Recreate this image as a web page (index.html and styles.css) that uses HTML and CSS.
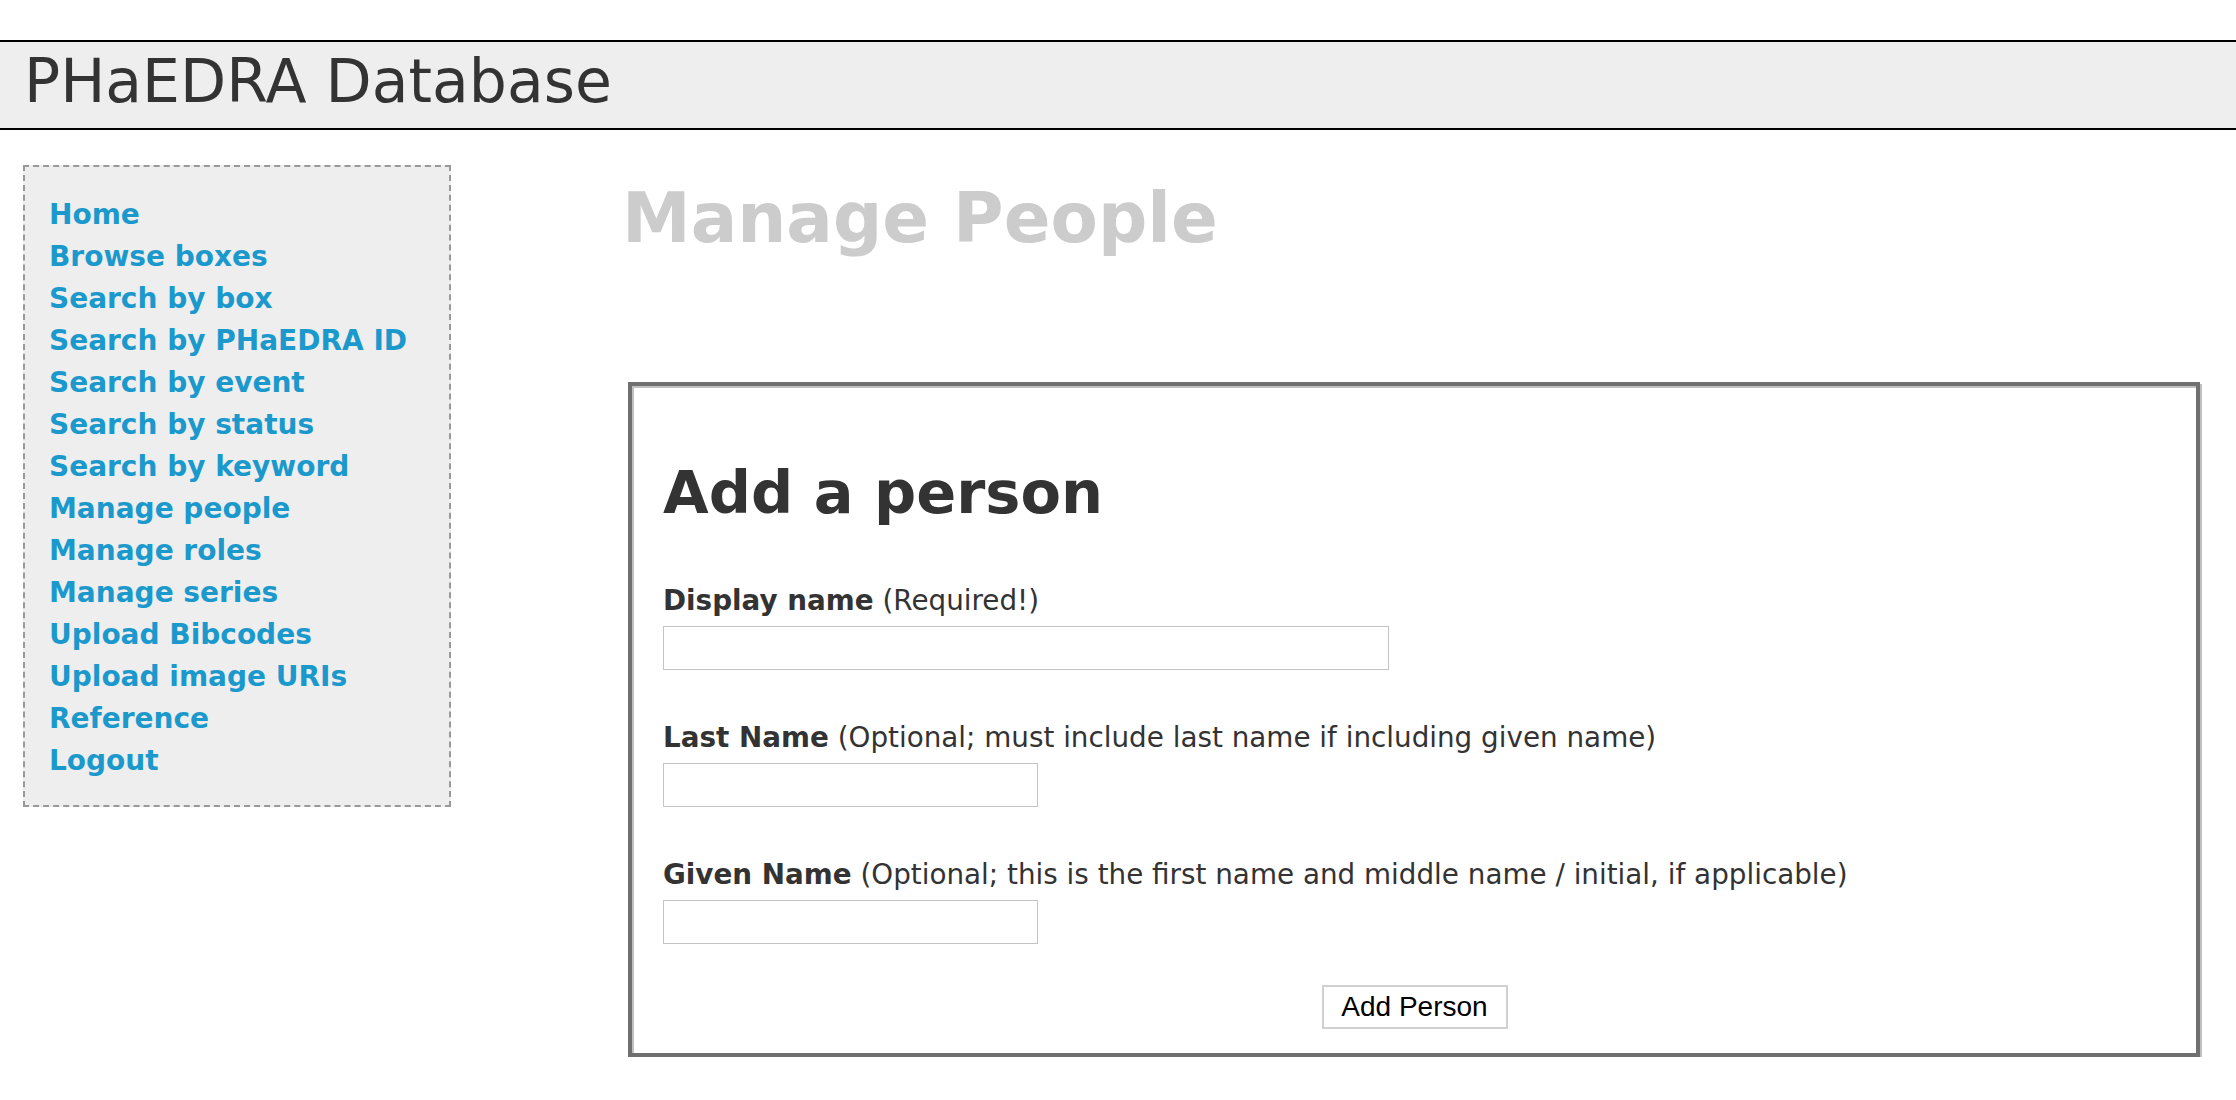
FILE: index.html
```html
<!DOCTYPE html>
<html lang="en">
<head>
<meta charset="utf-8">
<title>PHaEDRA Database - Manage People</title>
<link rel="stylesheet" href="styles.css">
</head>
<body>
<header class="site-header">
  <div class="site-title">PHaEDRA Database</div>
</header>
<div class="layout">
  <nav class="sidebar">
    <ul class="nav-list">
      <li><a href="#">Home</a></li>
      <li><a href="#">Browse boxes</a></li>
      <li><a href="#">Search by box</a></li>
      <li><a href="#">Search by PHaEDRA ID</a></li>
      <li><a href="#">Search by event</a></li>
      <li><a href="#">Search by status</a></li>
      <li><a href="#">Search by keyword</a></li>
      <li><a href="#">Manage people</a></li>
      <li><a href="#">Manage roles</a></li>
      <li><a href="#">Manage series</a></li>
      <li><a href="#">Upload Bibcodes</a></li>
      <li><a href="#">Upload image URIs</a></li>
      <li><a href="#">Reference</a></li>
      <li><a href="#">Logout</a></li>
    </ul>
  </nav>
  <main class="content">
    <h1 class="page-title">Manage People</h1>
    <form class="panel">
      <h2 class="panel-title">Add a person</h2>
      <div class="field">
        <label class="field-label"><b>Display name</b> (Required!)</label>
        <input class="text-input wide" type="text">
      </div>
      <div class="field">
        <label class="field-label"><b>Last Name</b> (Optional; must include last name if including given name)</label>
        <input class="text-input narrow" type="text">
      </div>
      <div class="field field-last">
        <label class="field-label"><b>Given Name</b> (Optional; this is the first name and middle name / initial, if applicable)</label>
        <input class="text-input narrow" type="text">
      </div>
      <div class="actions">
        <button class="submit-btn" type="button">Add Person</button>
      </div>
    </form>
  </main>
</div>
</body>
</html>
```

FILE: styles.css
```css
html, body {
  margin: 0;
  padding: 0;
  background: #ffffff;
}

body {
  font-family: "DejaVu Sans", Verdana, sans-serif;
  color: #333333;
}

.site-header {
  margin-top: 40px;
  border-top: 2px solid #000000;
  border-bottom: 2px solid #000000;
  background: #eeeeee;
  padding: 4px 0 12px 24px;
}

.site-title {
  font-size: 60px;
  line-height: 70px;
  color: #333333;
}

.layout {
  display: flex;
  align-items: flex-start;
}

.sidebar {
  box-sizing: border-box;
  width: 428px;
  margin: 35px 0 0 23px;
  border: 2px dashed #999999;
  background: #eeeeee;
  padding: 27px 0 23px 24px;
}

.nav-list {
  list-style: none;
  margin: 0;
  padding: 0;
}

.nav-list li {
  font-size: 28px;
  line-height: 42px;
  font-weight: bold;
}

.nav-list a {
  color: #1b99cc;
  text-decoration: none;
}

.content {
  flex: 1;
  margin: 0 36px 0 177px;
}

.page-title {
  margin: 48px 0 124px -6px;
  font-size: 69px;
  line-height: 80px;
  font-weight: bold;
  color: #cccccc;
}

.panel {
  margin: 0;
  border: 4px solid #707070;
  box-shadow: inset 2px 2px 0 #c0c0c0, 2px 2px 0 #c0c0c0;
  padding: 72px 30px 24px 31px;
}

.panel-title {
  margin: 0 0 57px 0;
  font-size: 59px;
  line-height: 70px;
  font-weight: bold;
  color: #333333;
}

.field {
  display: flex;
  flex-direction: column;
  align-items: flex-start;
  gap: 9px;
  margin-bottom: 52px;
}

.field.field-last {
  margin-bottom: 41px;
}

.field-label {
  font-size: 27.8px;
  line-height: 32px;
  color: #333333;
}

.field-label b {
  font-weight: bold;
}

.text-input {
  box-sizing: border-box;
  height: 44px;
  margin: 0;
  border: 1px solid #c4c4c4;
  background: #ffffff;
  padding: 0 6px;
  font-family: "DejaVu Sans", sans-serif;
  font-size: 24px;
}

.text-input.wide {
  width: 726px;
}

.text-input.narrow {
  width: 375px;
}

.actions {
  display: flex;
  justify-content: center;
}

.submit-btn {
  box-sizing: border-box;
  width: 186px;
  height: 44px;
  margin: 0;
  padding: 0;
  border: 2px solid #d0d0d0;
  background: #ffffff;
  font-family: "Liberation Sans", Arial, sans-serif;
  font-size: 28px;
  color: #000000;
}
```
